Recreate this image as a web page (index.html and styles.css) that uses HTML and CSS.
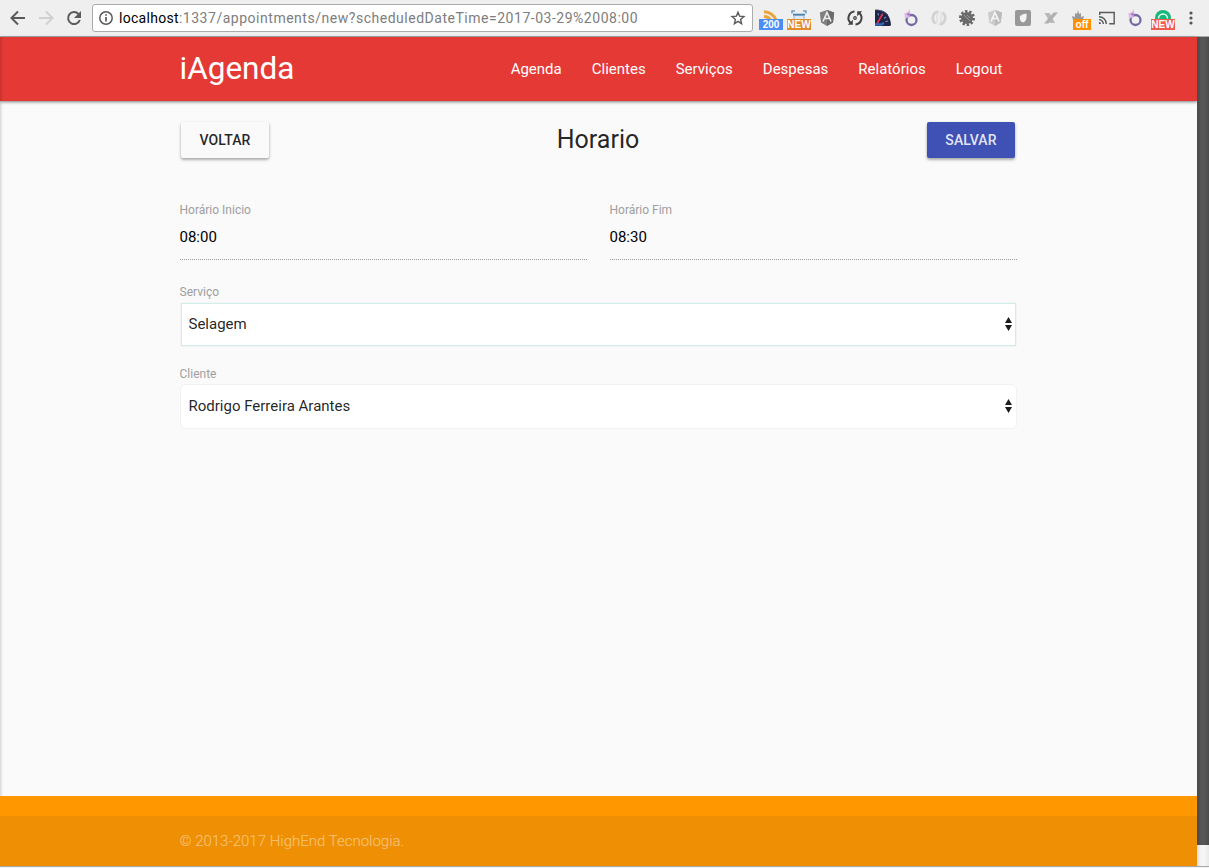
FILE: index.html
```html
<!DOCTYPE html>
<html lang="pt-BR">
<head>
<meta charset="utf-8">
<title>iAgenda</title>
<link rel="stylesheet" href="styles.css">
</head>
<body>
<div class="toolbar">
  <div class="nav-buttons">
    <svg width="28" height="20" viewBox="0 0 28 20"><path d="M25 10H12M18 3.500L11.500 10l6.500 6.500" fill="none" stroke="#5a5a5a" stroke-width="2"/></svg>
    <svg width="28" height="20" viewBox="0 0 28 20"><path d="M11 10h13M18 3.500l6.500 6.500-6.500 6.500" fill="none" stroke="#d0d0d0" stroke-width="2"/></svg>
    <svg width="28" height="20" viewBox="0 0 28 20"><path d="M22.500 6A6 6 0 1 0 23.800 12" fill="none" stroke="#5a5a5a" stroke-width="2"/><path d="M25 3v7h-7z" fill="#5a5a5a"/></svg>
  </div>
  <div class="address">
    <svg class="info" width="14" height="14" viewBox="0 0 14 14"><circle cx="7" cy="7" r="6.200" fill="none" stroke="#5a5a5a" stroke-width="1.500"/><path d="M7 6v4.500M7 3.200v1.600" stroke="#5a5a5a" stroke-width="1.700"/></svg>
    <span class="url"><b>localhost</b>:1337/appointments/new?scheduledDateTime=2017-03-29%2008:00</span>
    <svg class="star" width="16" height="16" viewBox="0 0 16 16"><path d="M8 2.200l1.600 4 4.300.4-3.300 2.800 1 4.300L8 11.400l-3.600 2.300 1-4.300-3.300-2.800 4.300-.4z" fill="none" stroke="#5a5a5a" stroke-width="1.400"/></svg>
  </div>
  <div class="extensions">
    <div class="ext"><svg width="20" height="20" viewBox="0 0 20 20"><path d="M3 3.700Q11.500 4 15 12M3 8.500Q7.500 8.500 9.500 12" fill="none" stroke="#e9a53b" stroke-width="3"/></svg><span class="badge blue">200</span></div>
    <div class="ext"><svg width="20" height="20" viewBox="0 0 20 20"><path d="M3 5.500V3h3M14 3h3v2.500" fill="none" stroke="#6f9fc2" stroke-width="1.500"/><path d="M5 8h10v4H5z" fill="#dce9f3"/><path d="M4 6.700h12" stroke="#4a86b4" stroke-width="2"/><path d="M5 7v4M15 7v4" stroke="#8db3cf"/></svg><span class="badge amber">NEW</span></div>
    <div class="ext"><svg width="20" height="20" viewBox="0 0 20 20"><path d="M10 2l7.200 2.600-1.200 10L10 18l-6-3.400-1.200-10z" fill="#808080"/><path d="M10 2l7.200 2.600-1.200 10L10 18z" fill="#6c6c6c"/><path d="M6 13.500L10 4.500l4 9M7.500 10.500h5" fill="none" stroke="#eee" stroke-width="1.600"/></svg></div>
    <div class="ext"><svg width="20" height="20" viewBox="0 0 20 20"><path d="M9.500 3.500A6.500 6.500 0 0 0 5.500 14.700M10.500 16.500A6.500 6.500 0 0 0 14.500 5.300" fill="none" stroke="#444" stroke-width="2"/><path d="M2.800 16.800h5v-5zM17.200 3.200h-5v5z" fill="#444"/><circle cx="10" cy="10" r="1.900" fill="#444"/><circle cx="10" cy="10" r=".7" fill="#ddd"/></svg></div>
    <div class="ext"><svg width="20" height="20" viewBox="0 0 20 20"><path d="M2 2h3q12 1 13 15l-1 1H2z" fill="#202447"/><path d="M2 2h3q6 .5 10 5" fill="none" stroke="#46506f" stroke-width="1"/><path d="M5 5l.500 2.500M9.500 5.500L9 8M13 9l-2 1.500M15 13l-2.500.7" stroke="#7189b8" stroke-width="1.200"/><path d="M9.500 6L4 16" stroke="#d8364e" stroke-width="1.700"/><path d="M2 16.500h6l3-1.500" stroke="#3566b8" stroke-width="2.500" fill="none"/></svg></div>
    <div class="ext"><svg width="20" height="20" viewBox="0 0 20 20"><circle cx="10.500" cy="12" r="5" fill="none" stroke="#716aa6" stroke-width="2.300"/><path d="M3.500 5l3-.500L8.500 1.500l1 4-1.500 4-4 1z" fill="#dcb9e2"/><path d="M5.500 6l3-1v3z" fill="#a85cc0"/></svg></div>
    <div class="ext"><svg width="20" height="20" viewBox="0 0 20 20"><path d="M9 3.500A6.800 6.800 0 0 0 6.500 15.500M11 16.500A6.800 6.800 0 0 0 13.500 4.500" fill="none" stroke="#d2d2d2" stroke-width="2.700"/><path d="M11 3q-4 3-3 7t-2 6M9 17q4-3 3-7t2-6" fill="none" stroke="#dedede" stroke-width="1.300"/></svg></div>
    <div class="ext"><svg width="20" height="20" viewBox="0 0 20 20"><circle cx="10" cy="10" r="6.700" fill="none" stroke="#666" stroke-width="2.600" stroke-dasharray="2.400 1.800"/><circle cx="10" cy="10" r="6" fill="#6b6b6b"/><path d="M7 7l6 6M10 7l3 3" stroke="#999" stroke-width="1"/></svg></div>
    <div class="ext"><svg width="20" height="20" viewBox="0 0 20 20"><path d="M10 2l7 2.600-1.200 10L10 18l-5.800-3.400L3 4.600z" fill="#cbcbcb"/><path d="M10 2l7 2.600-1.200 10L10 18z" fill="#bcbcbc"/><path d="M6 13.500L10 4.500l4 9M7.500 10.500h5" fill="none" stroke="#f6f6f6" stroke-width="1.600"/></svg></div>
    <div class="ext"><svg width="20" height="20" viewBox="0 0 20 20"><rect x="2" y="2" width="16" height="16" rx="2" fill="#989898"/><path d="M7 7.500Q9.500 6 13.500 5.500q.8 8-3.500 9-4-1-3-7z" fill="#f4f4f4"/><path d="M7.300 7.500q1 .8 1.700-1" fill="none" stroke="#bbb"/></svg></div>
    <div class="ext"><svg width="20" height="20" viewBox="0 0 20 20"><path d="M3.500 5h5l5.500 10H9.500z" fill="#b8b8b8"/><path d="M12.500 4.500H17L7.500 15.500H3z" fill="#b0b0b0"/></svg></div>
    <div class="ext"><svg width="20" height="20" viewBox="0 0 20 20"><path d="M4 12L3 8l3 1V5l2 1 1-4 1 4 2-1v4l3-1-1 4z" fill="#999"/></svg><span class="badge off">off</span></div>
    <div class="ext"><svg width="20" height="20" viewBox="0 0 20 20"><path d="M2.700 7V4.500h14.500v11.200h-5M2 8.700a7.300 7.300 0 0 1 7.300 7.300M2 11.600a4.400 4.400 0 0 1 4.400 4.400" fill="none" stroke="#5a5a5a" stroke-width="1.400"/><path d="M2 14a2 2 0 0 1 2 2H2z" fill="#5a5a5a"/></svg></div>
    <div class="ext"><svg width="20" height="20" viewBox="0 0 20 20"><circle cx="10.500" cy="12" r="5" fill="none" stroke="#716aa6" stroke-width="2.300"/><path d="M3.500 5l3-.500L8.500 1.500l1 4-1.500 4-4 1z" fill="#dcb9e2"/><path d="M5.500 6l3-1v3z" fill="#a85cc0"/></svg></div>
    <div class="ext"><svg width="20" height="20" viewBox="0 0 20 20"><circle cx="10" cy="10" r="8" fill="#18b77a"/><path d="M5.500 10.500a4.500 4.500 0 0 1 9 0" fill="none" stroke="#e9fff5" stroke-width="1.500"/></svg><span class="badge red">NEW</span></div>
    <div class="ext"><svg width="20" height="20" viewBox="0 0 20 20"><g fill="#555"><circle cx="10" cy="5" r="1.600"/><circle cx="10" cy="10" r="1.600"/><circle cx="10" cy="15" r="1.600"/></g></svg></div>
  </div>
</div>
<div class="viewport">
  <div class="page">
    <header class="navbar">
      <div class="container navbar-row">
        <a class="brand">iAgenda</a>
        <nav class="menu"><a>Agenda</a><a>Clientes</a><a>Serviços</a><a>Despesas</a><a>Relatórios</a><a>Logout</a></nav>
      </div>
    </header>
    <main class="container main">
      <div class="heading">
        <button class="btn">Voltar</button>
        <h1>Horario</h1>
        <button class="btn primary">Salvar</button>
      </div>
      <div class="times">
        <div class="field"><label>Horário Inicio</label><div class="value">08:00</div></div>
        <div class="field"><label>Horário Fim</label><div class="value">08:30</div></div>
      </div>
      <div class="choice">
        <label>Serviço</label>
        <div class="select focused"><span>Selagem</span><svg width="7" height="14" viewBox="0 0 7 14"><path d="M3.500 0L7 6H0zM0 8h7l-3.500 6z" fill="#1c1c1c"/></svg></div>
      </div>
      <div class="choice">
        <label>Cliente</label>
        <div class="select"><span>Rodrigo Ferreira Arantes</span><svg width="7" height="14" viewBox="0 0 7 14"><path d="M3.500 0L7 6H0zM0 8h7l-3.500 6z" fill="#1c1c1c"/></svg></div>
      </div>
    </main>
    <footer class="footer"><div class="copyright"><div class="container">© 2013-2017 HighEnd Tecnologia.</div></div></footer>
  </div>
  <div class="gutter"><div class="gutter-dark"></div><div class="gutter-light"></div></div>
</div>
</body>
</html>
```
FILE: styles.css
```css
* { box-sizing: border-box; }
body {
  margin: 0;
  width: 1209px;
  height: 868px;
  overflow: hidden;
  display: flex;
  flex-direction: column;
  background: #f2f2f2;
  font-family: Roboto, "Liberation Sans", sans-serif;
  font-size: 15px;
  color: rgba(0, 0, 0, .87);
}
svg { display: block; flex: none; }

.toolbar {
  height: 37px;
  flex: none;
  display: flex;
  align-items: center;
  background: #efefef;
  border-bottom: 1px solid #aaa;
}
.nav-buttons { display: flex; width: 92px; }
.address {
  display: flex;
  align-items: center;
  width: 661px;
  height: 28px;
  padding: 0 6px;
  background: #fff;
  border: 1px solid #ababab;
  border-radius: 3px;
}
.url {
  flex: 1;
  margin-left: 6px;
  font-size: 14px;
  letter-spacing: .52px;
  white-space: nowrap;
  color: #7d7d7d;
}
.url b { font-weight: 400; letter-spacing: .3px; color: #000; }
.extensions { display: flex; margin-left: 4px; }
.ext {
  position: relative;
  width: 28px;
  height: 20px;
  display: flex;
  justify-content: center;
}
.badge {
  position: absolute;
  left: 2px;
  top: 11px;
  width: 24px;
  height: 11px;
  font: bold 10px/12px "Liberation Sans", sans-serif;
  text-align: center;
  color: #fff;
}
.blue { background: #4a8df6; }
.amber { background: #e08b2c; }
.off { left: 8px; width: 18px; background: #ff8f00; }
.red { background: #f05b50; }

.viewport {
  height: 830px;
  flex: none;
  display: flex;
  border-bottom: 1px solid #aaa;
}
.page {
  width: 1197px;
  display: flex;
  flex-direction: column;
  background: #fafafa;
  box-shadow: inset 3px 0 3px -2px rgba(0, 0, 0, .18);
}
.container { width: 838px; margin: 0 auto; }
.navbar {
  height: 64px;
  flex: none;
  background: #e53935;
  box-shadow: inset 3px 0 3px -2px rgba(0, 0, 0, .18), 0 1px 3px rgba(0, 0, 0, .5);
}
.navbar-row {
  display: flex;
  justify-content: space-between;
  line-height: 64px;
  color: #fff;
}
.brand { font-size: 31.500px; }
.menu { display: flex; gap: 30px; padding-right: 15px; }

.main { flex: 1; padding-top: 21px; }
.heading {
  display: flex;
  justify-content: space-between;
  height: 36px;
  padding: 0 2.500px 0 1.500px;
}
.heading h1 {
  margin: 0;
  font-size: 25px;
  font-weight: 400;
  line-height: 36px;
}
.btn {
  width: 88px;
  height: 36px;
  padding: 0;
  border: 0;
  border-radius: 2px;
  background: #fafafa;
  box-shadow: 0 2px 3px rgba(0, 0, 0, .24), 0 1px 3px rgba(0, 0, 0, .15);
  font: 500 14px/36px Roboto, sans-serif;
  letter-spacing: .1px;
  text-transform: uppercase;
  color: rgba(0, 0, 0, .87);
}
.primary { background: #3f51b5; color: rgba(255, 255, 255, .87); }
.times {
  display: grid;
  grid-template-columns: 407.500px 407.500px;
  column-gap: 22.500px;
  margin-top: 45px;
}
label {
  display: block;
  font-size: 12px;
  line-height: 14px;
  color: #9e9e9e;
}
.value {
  height: 43px;
  line-height: 40px;
  border-bottom: 1px dotted rgba(0, 0, 0, .38);
  color: #000;
}
.choice { height: 57px; margin-top: 25px; }
.select {
  display: flex;
  align-items: center;
  justify-content: space-between;
  height: 45px;
  margin: 3px .5px 0;
  padding: 0 4px 2px 7.500px;
  background: #fff;
  border: 1px solid #f2f2f2;
  border-radius: 5px;
}
.focused {
  height: 43px;
  margin: 4px 1.500px 0;
  padding: 0 3px 1px 6.500px;
  border-color: #d0eeec;
  border-radius: 1px;
  box-shadow: 0 0 1px #bbb;
}

.footer { height: 70px; flex: none; padding-top: 20px; background: #ff9800; }
.copyright {
  height: 50px;
  line-height: 50px;
  font-weight: 300;
  background: rgba(51, 51, 51, .08);
  color: rgba(255, 255, 255, .5);
}
.gutter { flex: 1; display: flex; flex-direction: column; }
.gutter-dark { flex: 1; background: linear-gradient(90deg, #484848, #565656 4px, #565656 8px, #4b4b4b); }
.gutter-light { height: 21px; background: linear-gradient(90deg, #ddd, #f5f5f5 4px, #f5f5f5 8px, #e8e8e8); }
```
